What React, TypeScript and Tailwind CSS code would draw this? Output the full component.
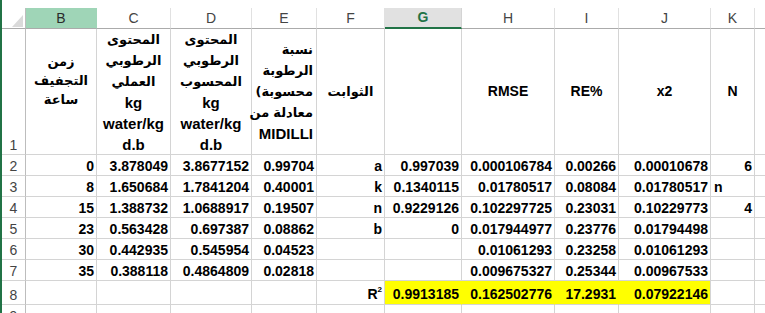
import React from "react";

const latin = "font-['Liberation_Sans',Arial,sans-serif]";
const arabic = "font-['DejaVu_Sans','Noto_Sans',sans-serif]";

const letters = ["B", "C", "D", "E", "F", "G", "H", "I", "J", "K", ""];

// data rows 2..8, columns B..K
const rows: string[][] = [
  ["0", "3.878049", "3.8677152", "0.99704", "a", "0.997039", "0.000106784", "0.00266", "0.00010678", "6"],
  ["8", "1.650684", "1.7841204", "0.40001", "k", "0.1340115", "0.01780517", "0.08084", "0.01780517", "n"],
  ["15", "1.388732", "1.0688917", "0.19507", "n", "0.9229126", "0.102297725", "0.23031", "0.10229773", "4"],
  ["23", "0.563428", "0.697387", "0.08862", "b", "0", "0.017944977", "0.23776", "0.01794498", ""],
  ["30", "0.442935", "0.545954", "0.04523", "", "", "0.01061293", "0.23258", "0.01061293", ""],
  ["35", "0.388118", "0.4864809", "0.02818", "", "", "0.009675327", "0.25344", "0.00967533", ""],
  ["", "", "", "", "R2", "0.9913185", "0.162502776", "17.2931", "0.07922146", ""],
];

const RowNum = ({ n, h }: { n: number; h: string }) => (
  <div className={`${h} flex items-end justify-center pb-[1px] border-r border-b border-r-[#bdbdbd] border-b-[#d4d4d4] text-[14px] leading-4 text-[#444] ${latin}`}>
    {n}
  </div>
);

const HeadCell = ({ l }: { l: string }) => {
  if (l === "B")
    return (
      <div className={`h-[21px] flex items-center justify-center bg-[#9fd5b7] border-r border-b border-r-[#9fd5b7] border-b-[#ababab] text-[14px] text-[#2b2b2b] ${latin}`}>
        B
      </div>
    );
  if (l === "G")
    return (
      <div className={`h-[21px] flex items-center justify-center bg-[#e1e1e1] border-r border-r-[#d4d4d4] border-b-2 border-b-[#217346] text-[14px] font-bold text-[#217346] ${latin}`}>
        G
      </div>
    );
  return (
    <div className={`h-[21px] flex items-center justify-center border-r border-b border-r-[#e1e1e1] border-b-[#ababab] text-[14px] text-[#444] ${latin}`}>
      {l}
    </div>
  );
};

const Ar = ({ children }: { children: React.ReactNode }) => (
  <div className={`${arabic} text-[13px] font-bold leading-[21px]`} dir="rtl">
    {children}
  </div>
);

const Lt = ({ children }: { children: React.ReactNode }) => (
  <div className={`${latin} text-[15px] font-bold leading-[21px]`}>{children}</div>
);

const grid = "border-r border-b border-[#d4d4d4]";

export default function App() {
  return (
    <div className="w-[765px] h-[313px] overflow-hidden bg-white border-l-2 border-[#217346] text-black">
      <div className="h-[8px]" />
      <div className="grid grid-cols-[24px_71px_74px_81px_65px_68px_77px_93px_64px_92px_44px_120px]">
        {/* column header */}
        <div className="h-[21px] flex items-end justify-end pr-[2px] pb-[1px] border-r border-b border-r-[#bdbdbd] border-b-[#ababab]">
          <svg width="11" height="12" viewBox="0 0 11 12">
            <polygon points="11,0 11,12 0,12" fill="#dadada" />
          </svg>
        </div>
        {letters.map((l, i) => (
          <HeadCell key={i} l={l} />
        ))}

        {/* row 1 */}
        <RowNum n={1} h="h-[126px]" />
        <div className={`h-[126px] ${grid} flex flex-col items-center pt-[23px]`}>
          <div className={`${arabic} text-[13px] font-bold leading-[19px]`}>زمن</div>
          <div className={`${arabic} text-[13px] font-bold leading-[19px]`}>التجفيف</div>
          <div className={`${arabic} text-[13px] font-bold leading-[19px]`}>ساعة</div>
        </div>
        <div className={`h-[126px] ${grid} flex flex-col items-center justify-center`}>
          <Ar>المحتوى</Ar>
          <Ar>الرطوبي</Ar>
          <Ar>العملي</Ar>
          <Lt>kg</Lt>
          <Lt>water/kg</Lt>
          <Lt>d.b</Lt>
        </div>
        <div className={`h-[126px] ${grid} flex flex-col items-center justify-center`}>
          <Ar>المحتوى</Ar>
          <Ar>الرطوبي</Ar>
          <Ar>المحسوب</Ar>
          <Lt>kg</Lt>
          <Lt>water/kg</Lt>
          <Lt>d.b</Lt>
        </div>
        <div className={`h-[126px] ${grid} flex flex-col items-end justify-center pr-[3px]`}>
          <Ar>نسبة</Ar>
          <Ar>الرطوبة</Ar>
          <div className={`${arabic} text-[13px] font-bold leading-[21px] flex flex-row [direction:ltr]`}>
            <span>(</span>
            <span>محسوبة</span>
          </div>
          <div className={`${arabic} text-[13px] font-bold leading-[21px] flex flex-row gap-[4px] [direction:ltr]`}>
            <span>من</span>
            <span>معادلة</span>
          </div>
          <Lt>MIDILLI</Lt>
        </div>
        <div className={`h-[126px] ${grid} flex items-center justify-center`}>
          <Ar>الثوابت</Ar>
        </div>
        <div className={`h-[126px] ${grid}`} />
        {["RMSE", "RE%", "x2", "N"].map((t) => (
          <div key={t} className={`h-[126px] ${grid} flex items-center justify-center ${latin} text-[14px] font-bold`}>
            {t}
          </div>
        ))}
        <div className={`h-[126px] ${grid}`} />

        {/* data rows */}
        {rows.map((r, ri) => {
          const last = ri === rows.length - 1;
          const h = last ? "h-[24px]" : "h-[21px]";
          const pb = last ? "pb-[2px]" : "pb-[1px]";
          return (
            <React.Fragment key={ri}>
              <RowNum n={ri + 2} h={h} />
              {r.map((v, ci) => {
                const yellow = last && ci >= 5 && ci <= 8;
                const leftAlign = ci === 9 && v === "n";
                const border = yellow
                  ? ci === 8
                    ? "bg-[#ffff00] border-r border-b border-r-[#d4d4d4] border-b-[#d4d4d4]"
                    : "bg-[#ffff00] border-r border-b border-r-[#ffff00] border-b-[#d4d4d4]"
                  : grid;
                return (
                  <div
                    key={ci}
                    className={`${h} ${border} flex items-end ${pb} ${leftAlign ? "justify-start pl-[3px]" : "justify-end pr-[2px]"} ${latin} text-[14px] leading-4 font-bold whitespace-nowrap overflow-hidden`}
                  >
                    {v === "R2" ? (
                      <span>
                        R<sup className="text-[8px] -top-[0.9em]">2</sup>
                      </span>
                    ) : (
                      v
                    )}
                  </div>
                );
              })}
              <div className={`${h} ${grid}`} />
            </React.Fragment>
          );
        })}

        {/* row 9 */}
        <RowNum n={9} h="h-[21px]" />
        {letters.map((_, i) => (
          <div key={i} className={`h-[21px] ${grid}`} />
        ))}
      </div>
    </div>
  );
}
